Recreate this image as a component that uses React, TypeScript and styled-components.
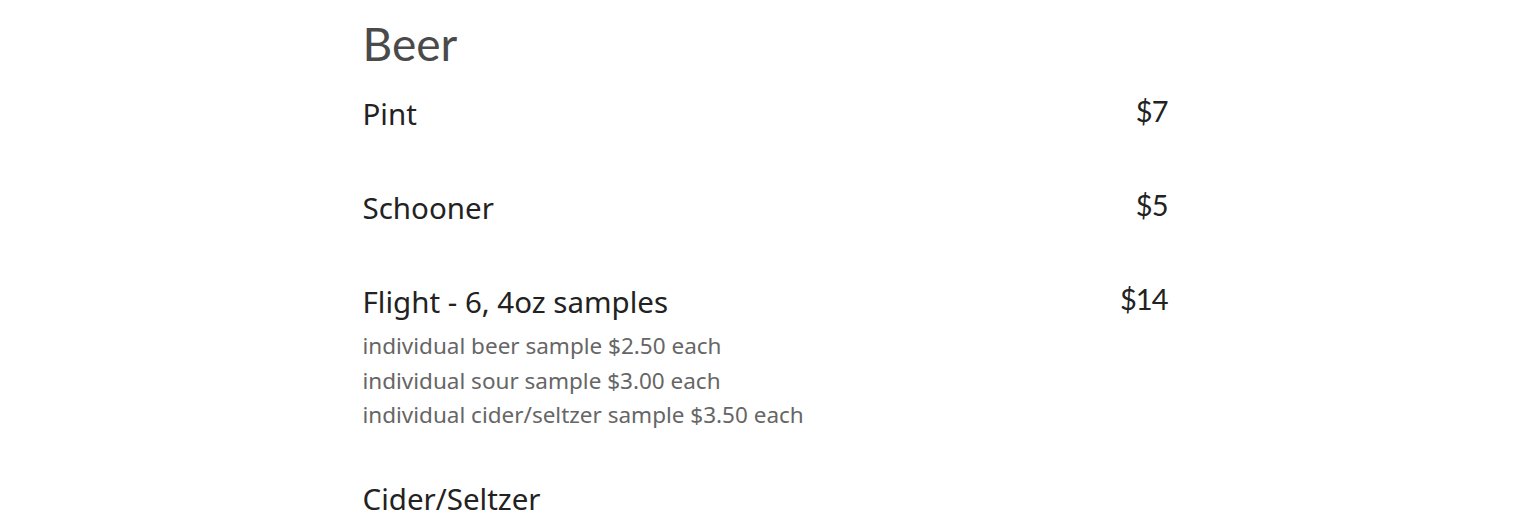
import styled, { createGlobalStyle } from 'styled-components';

const GlobalStyle = createGlobalStyle`
  body {
    margin: 0;
    background: #fff;
    font-family: 'Lato', 'Liberation Sans', sans-serif;
  }
`;

type Item = {
  name: string;
  price: string;
  notes?: string[];
};

const ITEMS: Item[] = [
  { name: 'Pint', price: '$7' },
  { name: 'Schooner', price: '$5' },
  {
    name: 'Flight - 6, 4oz samples',
    price: '$14',
    notes: [
      'individual beer sample $2.50 each',
      'individual sour sample $3.00 each',
      'individual cider/seltzer sample $3.50 each',
    ],
  },
  { name: 'Cider/Seltzer', price: '' },
];

const App = () => {
  return (
    <>
      <GlobalStyle />
      <Menu>
        <Heading>Beer</Heading>
        {ITEMS.map((item) => (
          <Row key={item.name}>
            <Info>
              <Name>{item.name}</Name>
              {item.notes && (
                <Notes>
                  {item.notes.map((n) => (
                    <Note key={n}>{n}</Note>
                  ))}
                </Notes>
              )}
            </Info>
            {item.price && <Price>{item.price}</Price>}
          </Row>
        ))}
      </Menu>
    </>
  );
};

const Menu = styled.section`
  width: 805px;
  margin: 0 auto;
  padding-top: 14px;
`;

const Heading = styled.h2`
  margin: 0 0 20px;
  font-family: 'Lato', sans-serif;
  font-weight: 400;
  font-size: 46px;
  line-height: 60px;
  color: #4a4a4a;
`;

const Row = styled.div`
  display: flex;
  justify-content: space-between;
  align-items: flex-start;
  margin-bottom: 54px;
`;

const Info = styled.div`
  display: flex;
  flex-direction: column;
`;

const Name = styled.div`
  font-family: 'Noto Sans', sans-serif;
  font-size: 29.5px;
  line-height: 40px;
  color: #222;
`;

const Notes = styled.div`
  margin: 7px 0 -8px;
`;

const Note = styled.div`
  font-family: 'Noto Sans', sans-serif;
  font-size: 22.5px;
  line-height: 34.5px;
  color: #666;
`;

const Price = styled.div`
  font-family: 'Lato', sans-serif;
  font-size: 29px;
  line-height: 34px;
  letter-spacing: -1px;
  color: #222;
`;

export default App;
